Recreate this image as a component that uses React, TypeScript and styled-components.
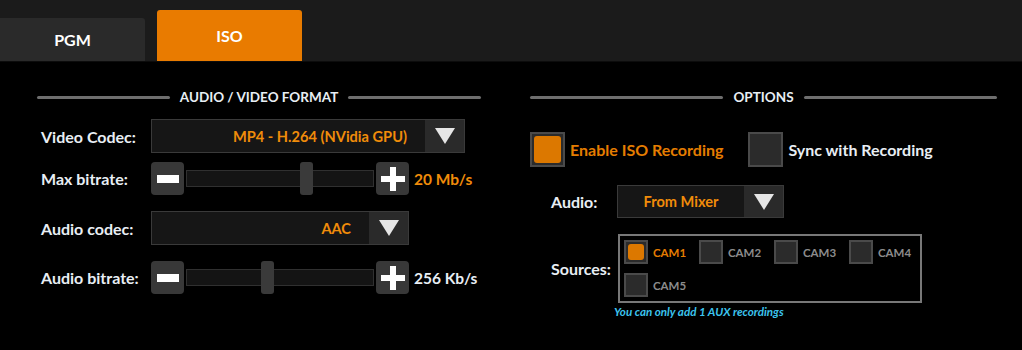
import React from "react";
import styled, { createGlobalStyle } from "styled-components";

const ORANGE = "#f08c0a";

const GlobalStyle = createGlobalStyle`
  html, body {
    margin: 0;
    padding: 0;
    background: #000;
    font-family: Lato, "Open Sans", sans-serif;
    color: #e8eef4;
  }
`;

const Page = styled.div`
  width: 1022px;
  height: 350px;
  background: #000;
  overflow: hidden;
`;

const TabBar = styled.div`
  height: 61px;
  background: #1b1b1b;
  border-bottom: 1px solid #0c0c0c;
  display: flex;
  align-items: flex-end;
  gap: 12px;
`;

const Tab = styled.div<{ $active?: boolean }>`
  width: 145px;
  height: ${({ $active }) => ($active ? "51px" : "43px")};
  background: ${({ $active }) => ($active ? "#e97b00" : "#2a2a2a")};
  border-radius: ${({ $active }) => ($active ? "3px 3px 0 0" : "0 3px 0 0")};
  display: flex;
  align-items: center;
  justify-content: center;
  font-weight: 700;
  font-size: 16px;
  color: #fff;
`;

const Body = styled.div`
  display: flex;
  padding: 0 0 0 37px;
  gap: 49px;
`;

const Column = styled.div<{ $w: number }>`
  width: ${({ $w }) => $w}px;
  display: flex;
  flex-direction: column;
`;

const Header = styled.div`
  display: flex;
  align-items: center;
  gap: 10px;
  height: 14px;
  margin-top: 28px;
  font-size: 13.5px;
  font-weight: 700;
  color: #e8eef4;
  white-space: nowrap;
  &::before,
  &::after {
    content: "";
    flex: 1;
    height: 3px;
    border-radius: 2px;
    background: #6e6e6e;
  }
`;

const Row = styled.div<{ $mt: number; $pl?: number }>`
  display: flex;
  align-items: center;
  margin-top: ${({ $mt }) => $mt}px;
  padding-left: ${({ $pl }) => $pl ?? 4}px;
`;

const Label = styled.div<{ $w: number }>`
  width: ${({ $w }) => $w}px;
  font-size: 16px;
  font-weight: 700;
  color: #e8eef4;
  flex-shrink: 0;
  white-space: nowrap;
`;

const Select = styled.div<{ $w: number; $h: number }>`
  width: ${({ $w }) => $w}px;
  height: ${({ $h }) => $h}px;
  box-sizing: border-box;
  border: 1px solid #3a3a3a;
  background: #161616;
  display: flex;
`;

const SelectText = styled.div<{ $align: string; $pr: number }>`
  flex: 1;
  display: flex;
  align-items: center;
  justify-content: ${({ $align }) => $align};
  padding-right: ${({ $pr }) => $pr}px;
  color: ${ORANGE};
  font-weight: 700;
  font-size: 14.6px;
  white-space: nowrap;
`;

const Arrow = styled.div`
  width: 39px;
  background: #2a2a2a;
  display: flex;
  align-items: center;
  justify-content: center;
`;

const SquareBtn = styled.div`
  width: 33px;
  height: 33px;
  border-radius: 4px;
  background: #383838;
  display: flex;
  align-items: center;
  justify-content: center;
  flex-shrink: 0;
`;

const Track = styled.div`
  position: relative;
  width: 188px;
  height: 33px;
  margin: 0 2px;
  display: flex;
  align-items: center;
`;

const TrackBar = styled.div`
  width: 100%;
  height: 17px;
  box-sizing: border-box;
  background: #141414;
  border: 1px solid #303030;
`;

const Thumb = styled.div`
  position: absolute;
  top: 0;
  width: 13px;
  height: 33px;
  border-radius: 3px;
  background: #3a3a3a;
`;

const Value = styled.div<{ $orange?: boolean }>`
  margin-left: 5px;
  font-size: 15.5px;
  font-weight: 700;
  color: ${({ $orange }) => ($orange ? ORANGE : "#e8eef4")};
  white-space: nowrap;
`;

const CheckRow = styled.div`
  display: flex;
  align-items: center;
  margin-top: 28px;
`;

const Box = styled.div<{ $size: number; $checked?: boolean }>`
  width: ${({ $size }) => $size}px;
  height: ${({ $size }) => $size}px;
  box-sizing: border-box;
  border: 2px solid #4a4a4a;
  background: #2b2b2b;
  padding: 2px;
  flex-shrink: 0;
  &::after {
    content: "";
    display: ${({ $checked }) => ($checked ? "block" : "none")};
    width: 100%;
    height: 100%;
    border-radius: 3px;
    background: #dc7800;
  }
`;

const CheckText = styled.div<{ $orange?: boolean; $mr?: number }>`
  margin-left: 5px;
  margin-right: ${({ $mr }) => $mr ?? 0}px;
  font-size: 16px;
  font-weight: 700;
  color: ${({ $orange }) => ($orange ? "#e57d00" : "#e8eef4")};
  white-space: nowrap;
`;

const SourcesRow = styled.div`
  display: flex;
  align-items: center;
  margin-top: 16px;
  padding-left: 21px;
`;

const SourcesBox = styled.div`
  width: 304px;
  box-sizing: border-box;
  border: 2px solid #787878;
  padding: 4px;
  display: grid;
  grid-template-columns: repeat(4, 75px);
  row-gap: 9px;
`;

const Cam = styled.div`
  display: flex;
  align-items: center;
`;

const CamText = styled.div<{ $on?: boolean }>`
  margin-left: 5px;
  font-size: 11.5px;
  font-weight: 700;
  color: ${({ $on }) => ($on ? "#e57d00" : "#8c8c8c")};
`;

const Note = styled.div`
  margin: 2px 0 0 84px;
  font-size: 11.6px;
  font-weight: 700;
  font-style: italic;
  color: #3cc4ee;
`;

const Triangle = () => (
  <svg width="22" height="18" viewBox="0 0 22 18">
    <polygon points="1,1 21,1 11,17" fill="#e6e6e6" />
  </svg>
);

const Minus = () => (
  <svg width="22" height="8" viewBox="0 0 22 8">
    <rect x="0" y="0" width="22" height="8" fill="#fff" />
  </svg>
);

const Plus = () => (
  <svg width="24" height="24" viewBox="0 0 24 24">
    <rect x="0" y="9" width="24" height="6" fill="#fff" />
    <rect x="9" y="0" width="6" height="24" fill="#fff" />
  </svg>
);

const Slider = ({ pos, value, orange }: { pos: number; value: string; orange?: boolean }) => (
  <>
    <SquareBtn>
      <Minus />
    </SquareBtn>
    <Track>
      <TrackBar />
      <Thumb style={{ left: pos }} />
    </Track>
    <SquareBtn>
      <Plus />
    </SquareBtn>
    <Value $orange={orange}>{value}</Value>
  </>
);

const cams = ["CAM1", "CAM2", "CAM3", "CAM4", "CAM5"];

export default function App() {
  return (
    <Page>
      <GlobalStyle />
      <TabBar>
        <Tab>PGM</Tab>
        <Tab $active>ISO</Tab>
      </TabBar>
      <Body>
        <Column $w={444}>
          <Header>AUDIO / VIDEO FORMAT</Header>
          <Row $mt={15}>
            <Label $w={110}>Video Codec:</Label>
            <Select $w={314} $h={34}>
              <SelectText $align="flex-end" $pr={18}>
                MP4 - H.264 (NVidia GPU)
              </SelectText>
              <Arrow>
                <Triangle />
              </Arrow>
            </Select>
          </Row>
          <Row $mt={9}>
            <Label $w={110}>Max bitrate:</Label>
            <Slider pos={114} value="20 Mb/s" orange />
          </Row>
          <Row $mt={16}>
            <Label $w={110}>Audio codec:</Label>
            <Select $w={258} $h={34}>
              <SelectText $align="flex-end" $pr={18}>
                AAC
              </SelectText>
              <Arrow>
                <Triangle />
              </Arrow>
            </Select>
          </Row>
          <Row $mt={16}>
            <Label $w={110}>Audio bitrate:</Label>
            <Slider pos={75} value="256 Kb/s" />
          </Row>
        </Column>
        <Column $w={467}>
          <Header>OPTIONS</Header>
          <CheckRow>
            <Box $size={35} $checked />
            <CheckText $orange $mr={25}>
              Enable ISO Recording
            </CheckText>
            <Box $size={35} />
            <CheckText>Sync with Recording</CheckText>
          </CheckRow>
          <Row $mt={18} $pl={21}>
            <Label $w={66}>Audio:</Label>
            <Select $w={167} $h={33}>
              <SelectText $align="center" $pr={0}>
                From Mixer
              </SelectText>
              <Arrow>
                <Triangle />
              </Arrow>
            </Select>
          </Row>
          <SourcesRow>
            <Label $w={67}>Sources:</Label>
            <SourcesBox>
              {cams.map((c, i) => (
                <Cam key={c}>
                  <Box $size={24} $checked={i === 0} />
                  <CamText $on={i === 0}>{c}</CamText>
                </Cam>
              ))}
            </SourcesBox>
          </SourcesRow>
          <Note>You can only add 1 AUX recordings</Note>
        </Column>
      </Body>
    </Page>
  );
}
